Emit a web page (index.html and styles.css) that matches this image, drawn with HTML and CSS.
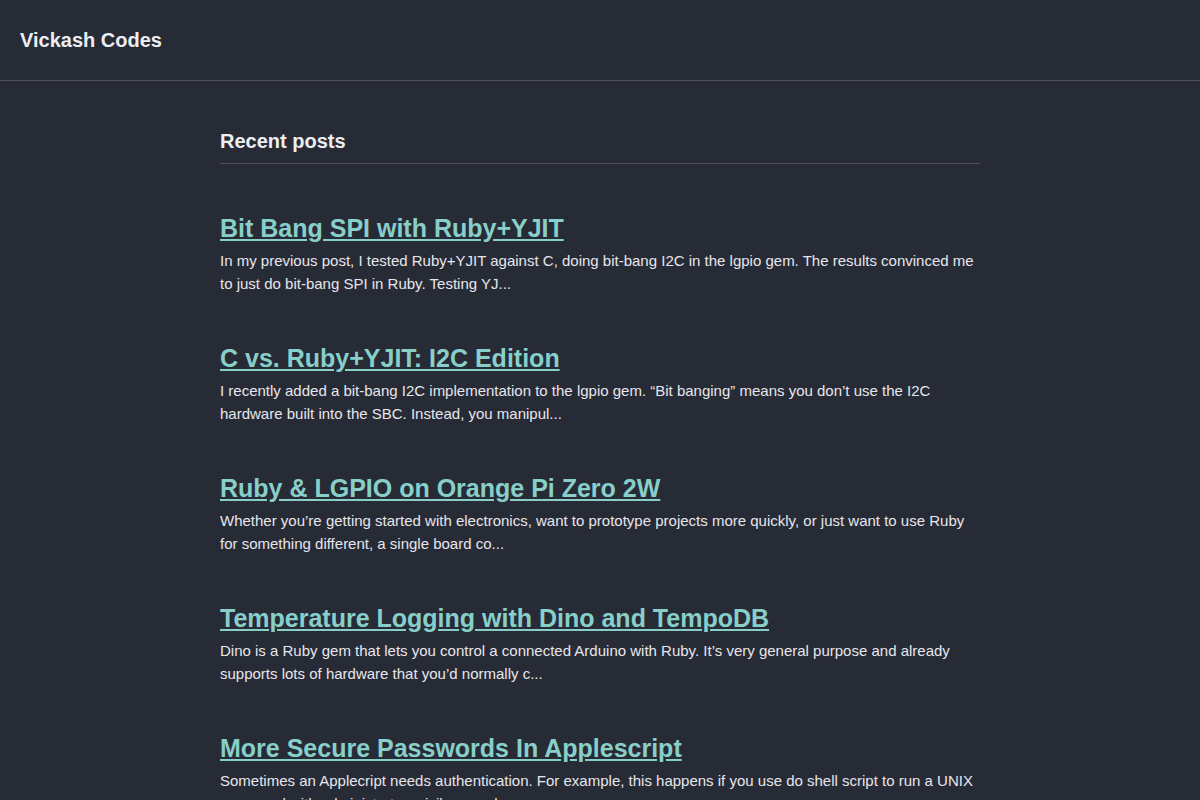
FILE: index.html
```html
<!DOCTYPE html>
<html>
<head>
<meta charset="utf-8">
<link rel="stylesheet" href="styles.css">
</head>
<body>
<header class="site-header">
  <a class="site-title" href="#">Vickash Codes</a>
</header>
<main class="content">
  <h2 class="section-title">Recent posts</h2>
  <ul class="post-list">
    <li class="post">
      <h3 class="post-title"><a href="#">Bit Bang SPI with Ruby+YJIT</a></h3>
      <p class="post-excerpt">In my previous post, I tested Ruby+YJIT against C, doing bit-bang I2C in the lgpio gem. The results convinced me to just do bit-bang SPI in Ruby. Testing YJ...</p>
    </li>
    <li class="post">
      <h3 class="post-title"><a href="#">C vs. Ruby+YJIT: I2C Edition</a></h3>
      <p class="post-excerpt">I recently added a bit-bang I2C implementation to the lgpio gem. “Bit banging” means you don’t use the I2C hardware built into the SBC. Instead, you manipul...</p>
    </li>
    <li class="post">
      <h3 class="post-title"><a href="#">Ruby &amp; LGPIO on Orange Pi Zero 2W</a></h3>
      <p class="post-excerpt">Whether you’re getting started with electronics, want to prototype projects more quickly, or just want to use Ruby for something different, a single board co...</p>
    </li>
    <li class="post">
      <h3 class="post-title"><a href="#">Temperature Logging with Dino and TempoDB</a></h3>
      <p class="post-excerpt">Dino is a Ruby gem that lets you control a connected Arduino with Ruby. It’s very general purpose and already supports lots of hardware that you’d normally c...</p>
    </li>
    <li class="post">
      <h3 class="post-title"><a href="#">More Secure Passwords In Applescript</a></h3>
      <p class="post-excerpt">Sometimes an Applecript needs authentication. For example, this happens if you use do shell script to run a UNIX command with administrator privileges, when...</p>
    </li>
  </ul>
</main>
</body>
</html>
```

FILE: styles.css
```css
html, body {
  margin: 0;
  padding: 0;
}
body {
  background: #272b36;
  color: #e6e6ec;
  font-family: "Liberation Sans", Arial, sans-serif;
}
.site-header {
  height: 81px;
  box-sizing: border-box;
  border-bottom: 1px solid #50535c;
  padding: 0 20px;
  display: flex;
  align-items: center;
}
.site-title {
  color: #eceef3;
  font-weight: bold;
  font-size: 20px;
  text-decoration: none;
}
.content {
  width: 760px;
  margin: 0 auto;
  padding-top: 48px;
}
.section-title {
  margin: 0;
  font-size: 20px;
  line-height: 24px;
  padding-bottom: 10px;
  border-bottom: 1px solid #50535c;
  color: #eceef3;
}
.post-list {
  list-style: none;
  margin: 0;
  padding: 1px 0 0;
}
.post {
  margin-top: 48px;
}
.post-title {
  margin: 0 0 6px;
  font-size: 25px;
  line-height: 30px;
}
.post-title a {
  color: #88cfca;
}
.post-excerpt {
  margin: 0;
  font-size: 15px;
  line-height: 23px;
}
```
